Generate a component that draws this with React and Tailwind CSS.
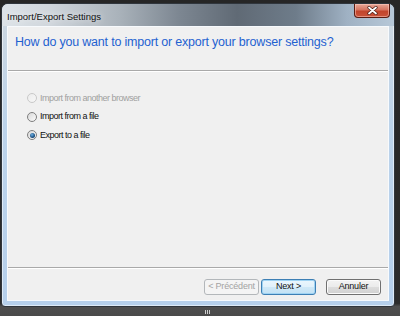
import React from "react";

const F = { fontFamily: '"Liberation Sans", Arial, sans-serif' };

function Radio({ state }) {
  if (state === "disabled") {
    return (
      <div className="w-[10px] h-[10px] rounded-full border border-[#c9c9c9] bg-[linear-gradient(135deg,#ececec,#f7f7f7)]" />
    );
  }
  return (
    <div className="w-[10px] h-[10px] rounded-full border border-[#7e7e7e] bg-[linear-gradient(135deg,#d8d8d8,#fbfbfb)] flex items-center justify-center">
      {state === "checked" && (
        <div className="w-[5px] h-[5px] rounded-full bg-[radial-gradient(circle_at_40%_35%,#6fb3e6,#1c4f80_60%,#0f2c4a)]" />
      )}
    </div>
  );
}

function Btn({ children, kind }) {
  const base =
    "w-[55px] h-[16px] rounded-[3px] flex items-center justify-center text-[9px] tracking-[-0.2px]";
  if (kind === "disabled")
    return (
      <div className={base + " border border-[#b3b7ba] bg-[#f4f4f4] text-[#a3a3a3]"} style={F}>
        {children}
      </div>
    );
  if (kind === "default")
    return (
      <div
        className={
          base +
          " border border-[#3d7fb4] bg-[linear-gradient(#eaf6fd,#e1f1fb_50%,#cfe8f7_51%,#c2e2f5)] shadow-[inset_0_0_0_1px_#9fd3f3] text-[#111]"
        }
        style={F}
      >
        {children}
      </div>
    );
  return (
    <div
      className={
        base +
        " border border-[#707070] bg-[linear-gradient(#f3f3f3,#ebebeb_50%,#dddddd_51%,#d0d0d0)] shadow-[inset_0_0_0_1px_#fbfbfb] text-[#111]"
      }
      style={F}
    >
      {children}
    </div>
  );
}

export default function App() {
  return (
    <div className="w-[400px] h-[316px] overflow-hidden bg-[linear-gradient(#262626_0%,#2c2c2c_96%,#4e4e4e_97%,#4a4a4a)] pt-[3px] pl-[1px] flex flex-col">
      <div className="w-[394px] h-[304px] shrink-0 rounded-t-[7px] rounded-b-[4px] border border-[#30363d] bg-[linear-gradient(#cfd8e0,#bcd3ea_40%,#b6d0ec)] flex flex-col shadow-[inset_0_0_0_1px_rgba(255,255,255,0.55)]">
        {/* title bar */}
        <div className="h-[22px] shrink-0 flex items-start justify-between rounded-t-[6px] bg-[linear-gradient(90deg,#dde3e8_0%,#d0d6dc_12%,#a9b2ba_30%,#7d8792_45%,#606a75_60%,#6e7c8a_75%,#9fb1c3_88%,#b7c8d8_100%)]">
          <div
            className="pl-[5px] pt-[7px] text-[9.5px] leading-[11px] text-[#101010] [text-shadow:0_0_6px_rgba(255,255,255,0.9)]"
            style={F}
          >
            Import/Export Settings
          </div>
          <div className="mr-[4px] w-[36px] h-[14px] rounded-b-[4px] border border-t-0 border-[#5b1c12] bg-[linear-gradient(#e8a897,#d67460_45%,#c2442b_55%,#c9533a)] flex items-center justify-center shadow-[inset_0_0_0_1px_rgba(255,210,200,0.5)]">
            <svg width="11" height="9" viewBox="0 0 11 9">
              <path d="M2 1.5 L9 7.5 M9 1.5 L2 7.5" stroke="#4a1a12" strokeWidth="3.2" strokeLinecap="round" />
              <path d="M2 1.5 L9 7.5 M9 1.5 L2 7.5" stroke="#ffffff" strokeWidth="1.8" strokeLinecap="round" />
            </svg>
          </div>
        </div>
        {/* client */}
        <div className="mx-[5px] mb-[5px] flex-1 border border-[#f7fafd] bg-[#f0f0f0] flex flex-col">
          <div className="h-[43px] shrink-0 pl-[7px] pt-[7px]">
            <div
              className="text-[12.5px] leading-[16px] tracking-[-0.2px] text-[#1f62d0] whitespace-nowrap"
              style={F}
            >
              How do you want to import or export your browser settings?
            </div>
          </div>
          <div className="h-px bg-[#a9a9a9]" />
          <div className="h-px bg-[#ffffff]" />
          <div className="h-[195px] shrink-0 pl-[19px] pt-[17px] flex flex-col">
            <div className="h-[18.5px] flex items-center gap-[3px]">
              <Radio state="disabled" />
              <span className="text-[9px] tracking-[-0.5px] text-[#a0a0a0]" style={F}>
                Import from another browser
              </span>
            </div>
            <div className="h-[18.5px] flex items-center gap-[3px]">
              <Radio state="off" />
              <span className="text-[9px] tracking-[-0.5px] text-[#111]" style={F}>
                Import from a file
              </span>
            </div>
            <div className="h-[18.5px] flex items-center gap-[3px]">
              <Radio state="checked" />
              <span className="text-[9px] tracking-[-0.5px] text-[#111]" style={F}>
                Export to a file
              </span>
            </div>
          </div>
          <div className="h-px bg-[#a9a9a9]" />
          <div className="h-px bg-[#ffffff]" />
          <div className="flex-1 flex items-start justify-end pt-[10px] pr-[7px]">
            <Btn kind="disabled">&lt; Précédent</Btn>
            <div className="w-[2px]" />
            <Btn kind="default">Next &gt;</Btn>
            <div className="w-[10px]" />
            <Btn>Annuler</Btn>
          </div>
        </div>
      </div>
      <div className="pl-[204px] pt-[3px] flex gap-[1px]">
        <div className="w-px h-[4px] bg-[#cfcfcf]" />
        <div className="w-px h-[4px] bg-[#cfcfcf]" />
        <div className="w-px h-[4px] bg-[#cfcfcf]" />
      </div>
    </div>
  );
}
